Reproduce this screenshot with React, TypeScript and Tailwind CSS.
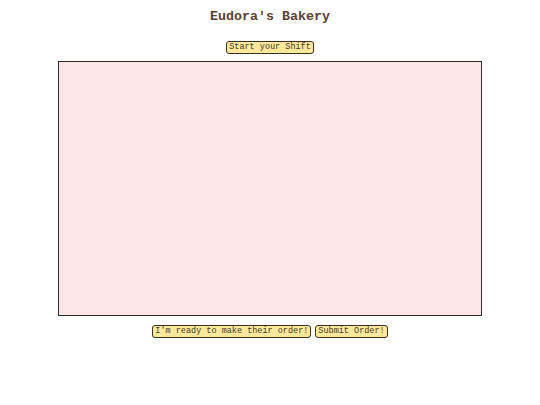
export default function App() {
  const btn =
    'h-[13px] px-[2px] text-[8.5px] leading-[11px] bg-[#fde89c] text-[#4a3a2a] border border-[#3d3020] rounded-[3px]'

  return (
    <div className="w-[540px] h-[405px] bg-white flex flex-col items-center font-['Courier','Nimbus_Mono_PS','Courier_New','Liberation_Mono',monospace]">
      <h1 className="mt-[9px] h-[16px] leading-[16px] text-[13.33px] font-bold text-[#5c4033]">
        Eudora's Bakery
      </h1>
      <button className={`${btn} mt-[16px]`}>Start your Shift</button>
      <div className="mt-[7px] w-[424px] h-[255px] bg-[#ffe4e8] border border-[#2e2a28]" />
      <div className="mt-[9px] flex gap-[4px]">
        <button className={btn}>I'm ready to make their order!</button>
        <button className={btn}>Submit Order!</button>
      </div>
    </div>
  )
}
